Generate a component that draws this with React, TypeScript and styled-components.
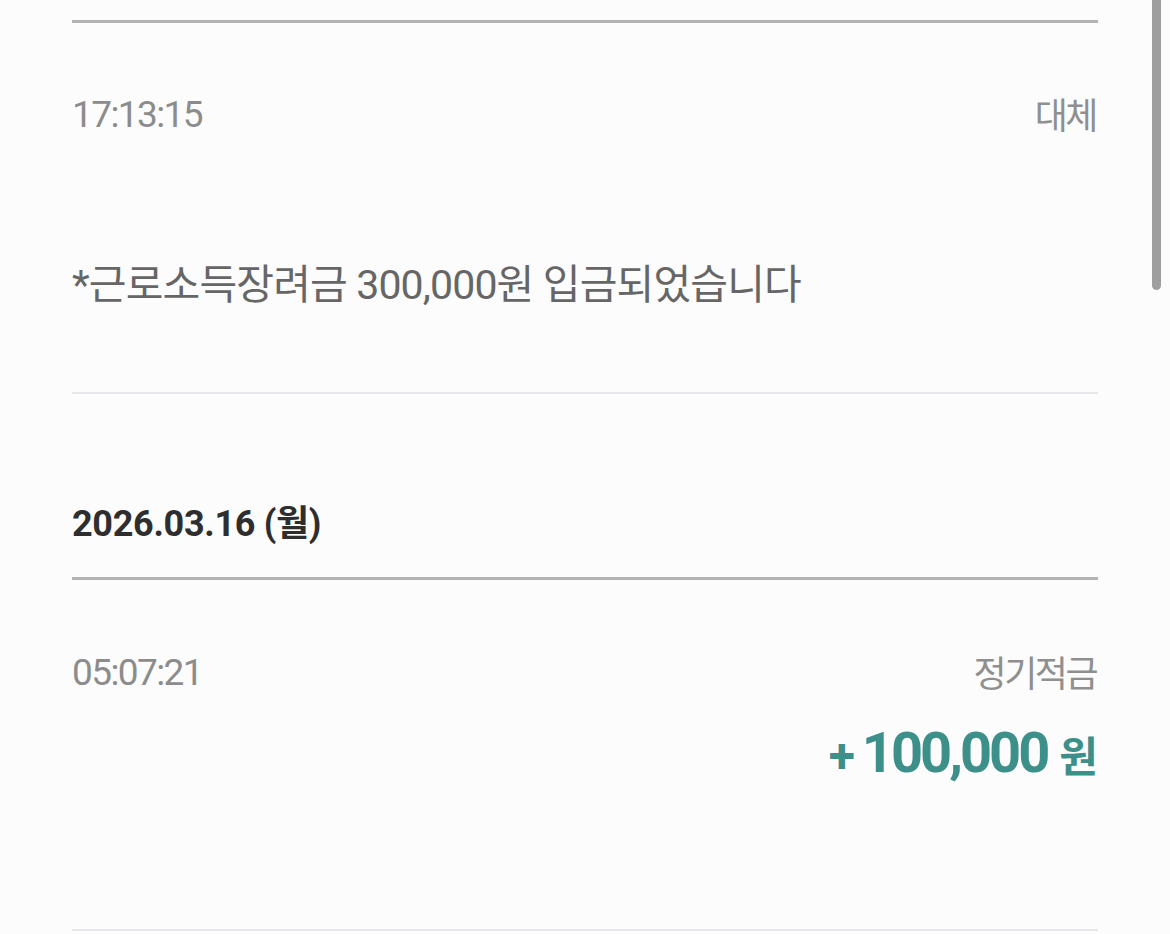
import React from "react";
import styled, { createGlobalStyle } from "styled-components";

const GlobalStyle = createGlobalStyle`
  html, body {
    margin: 0;
    padding: 0;
    background: #fcfcfc;
  }
  body {
    font-family: Roboto, "Noto Sans CJK KR", sans-serif;
    -webkit-font-smoothing: antialiased;
  }
`;

const Page = styled.div`
  position: relative;
  min-height: 934px;
  box-sizing: border-box;
  padding: 20px 72px 0;
  background: #fcfcfc;
  overflow: hidden;
`;

const Rule = styled.div<{ $light?: boolean; $top?: number }>`
  height: ${(p) => (p.$light ? 2 : 3)}px;
  background: ${(p) => (p.$light ? "#e6e6eb" : "#b3b3b3")};
  margin-top: ${(p) => p.$top ?? 0}px;
`;

const MetaRow = styled.div<{ $top: number }>`
  display: flex;
  justify-content: space-between;
  align-items: center;
  height: 40px;
  margin-top: ${(p) => p.$top}px;
  color: #8c8c8c;
`;

const Time = styled.span`
  font-family: Roboto, sans-serif;
  font-size: 37px;
  letter-spacing: -1.6px;
  line-height: 40px;
`;

const Category = styled.span`
  font-family: "Noto Sans CJK KR", sans-serif;
  font-size: 36px;
  letter-spacing: -2.5px;
  line-height: 40px;
  color: #8f8f8f;
  margin-right: 2px;
  padding-bottom: 5px;
`;

const Message = styled.div`
  margin-top: 125px;
  height: 50px;
  line-height: 50px;
  font-family: Roboto, "Noto Sans CJK KR", sans-serif;
  font-size: 41px;
  letter-spacing: -0.85px;
  color: #666666;
  white-space: nowrap;
`;

const DateHeader = styled.div`
  margin-top: 108px;
  margin-bottom: 31px;
  height: 44px;
  line-height: 44px;
  font-family: Roboto, "Noto Sans CJK KR", sans-serif;
  font-weight: 700;
  font-size: 36px;
  letter-spacing: -0.3px;
  color: #2e2e2e;
`;

const AmountRow = styled.div`
  display: flex;
  justify-content: flex-end;
  align-items: baseline;
  margin-top: 30px;
  height: 60px;
  line-height: 60px;
  color: #3d8f89;
  font-weight: 700;
`;

const Sign = styled.span`
  font-family: Roboto, sans-serif;
  font-size: 48px;
  margin-right: 7px;
`;

const Amount = styled.span`
  font-family: Roboto, sans-serif;
  font-size: 56px;
  letter-spacing: -3px;
`;

const Unit = styled.span`
  font-family: "Noto Sans CJK KR", sans-serif;
  font-size: 42px;
  margin-left: 12px;
  margin-right: 0;
`;

const Scrollbar = styled.div`
  position: absolute;
  top: 0;
  right: 9px;
  width: 9px;
  height: 290px;
  background: #9e9e9e;
  border-radius: 0 0 5px 5px;
`;

export default function App() {
  return (
    <>
      <GlobalStyle />
      <Page>
        <Rule />
        <MetaRow $top={72}>
          <Time>17:13:15</Time>
          <Category>대체</Category>
        </MetaRow>
        <Message>*근로소득장려금 300,000원 입금되었습니다</Message>
        <Rule $light $top={82} />
        <DateHeader>2026.03.16 (월)</DateHeader>
        <Rule />
        <MetaRow $top={73}>
          <Time>05:07:21</Time>
          <Category>정기적금</Category>
        </MetaRow>
        <AmountRow>
          <Sign>+</Sign>
          <Amount>100,000</Amount>
          <Unit>원</Unit>
        </AmountRow>
        <Rule $light $top={146} />
        <Scrollbar />
      </Page>
    </>
  );
}
